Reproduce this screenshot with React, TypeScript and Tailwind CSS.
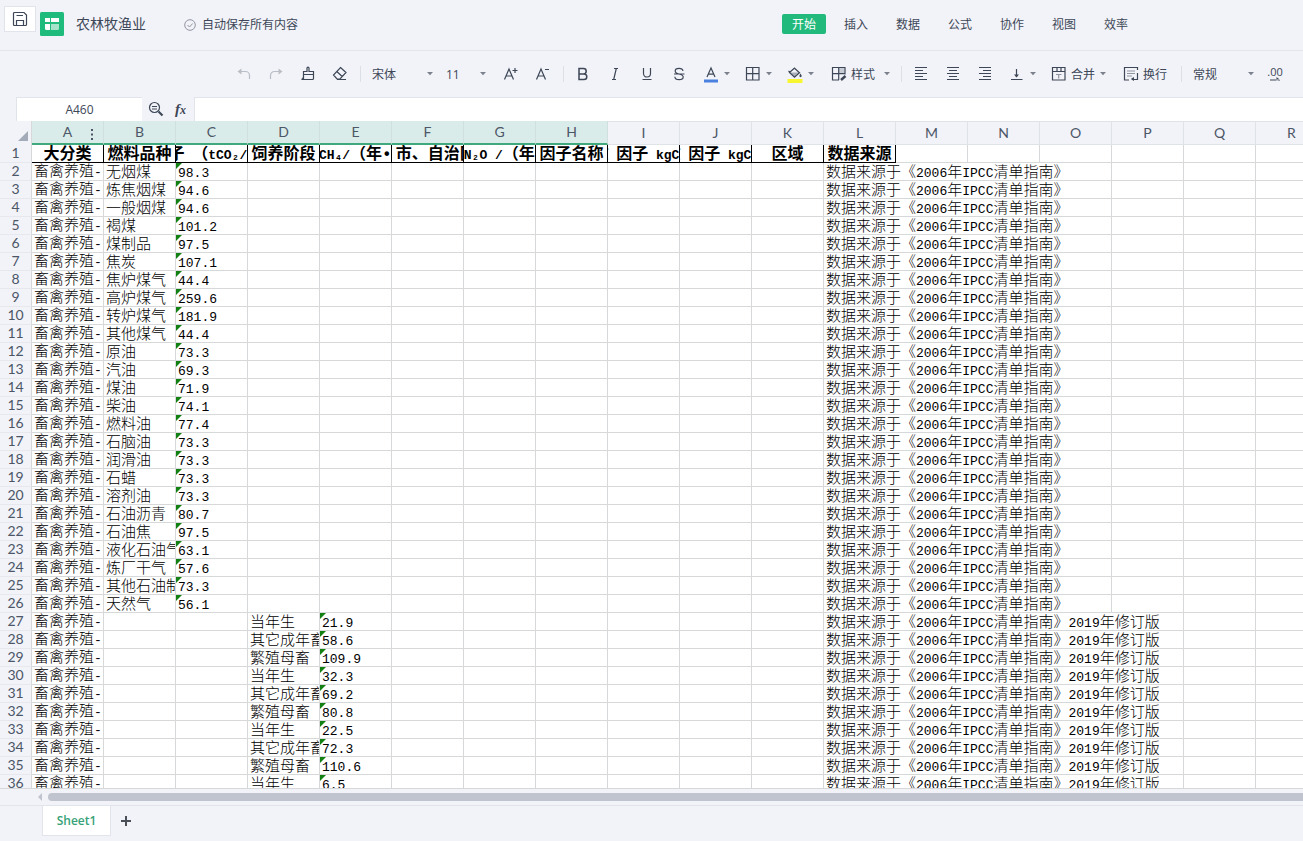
import React from "react";

const cols = "ABCDEFGHIJKLMNOPQR".split("");

const headers = [
  "大分类",
  "燃料品种",
  "因子 （tCO₂/TJ)",
  "饲养阶段",
  "kgCH₄/（年•头",
  "省、市、自治区  ",
  "kgN₂O /（年头",
  "因子名称",
  "排放 因子 kgCO₂/t",
  "排放 因子 kgCO₂/t",
  "区域",
  "数据来源",
];

const fuels = [
  ["无烟煤", "98.3"],
  ["炼焦烟煤", "94.6"],
  ["一般烟煤", "94.6"],
  ["褐煤", "101.2"],
  ["煤制品", "97.5"],
  ["焦炭", "107.1"],
  ["焦炉煤气", "44.4"],
  ["高炉煤气", "259.6"],
  ["转炉煤气", "181.9"],
  ["其他煤气", "44.4"],
  ["原油", "73.3"],
  ["汽油", "69.3"],
  ["煤油", "71.9"],
  ["柴油", "74.1"],
  ["燃料油", "77.4"],
  ["石脑油", "73.3"],
  ["润滑油", "73.3"],
  ["石蜡", "73.3"],
  ["溶剂油", "73.3"],
  ["石油沥青", "80.7"],
  ["石油焦", "97.5"],
  ["液化石油气", "63.1"],
  ["炼厂干气", "57.6"],
  ["其他石油制品", "73.3"],
  ["天然气", "56.1"],
];

const stages = [
  ["当年生", "21.9"],
  ["其它成年畜", "58.6"],
  ["繁殖母畜", "109.9"],
  ["当年生", "32.3"],
  ["其它成年畜", "69.2"],
  ["繁殖母畜", "80.8"],
  ["当年生", "22.5"],
  ["其它成年畜", "72.3"],
  ["繁殖母畜", "110.6"],
  ["当年生", "6.5"],
];

const source = "数据来源于《2006年IPCC清单指南》";

// latin runs are set smaller so that two of them fill one full-width character
const Mixed = ({ text }: { text: string }) => (
  <>
    {text.split(/([\x20-\x7e₀-₉]+)/).map((part, i) =>
      i % 2 ? (
        <span key={i} className="text-[13px]">{part}</span>
      ) : (
        part
      )
    )}
  </>
);

const Cell = ({ text = "", num, span }: { text?: string; num?: boolean; span?: number }) => (
  <td colSpan={span} className="relative border-r border-b border-[#d6d8da] p-0">
    {num && (
      <span className="absolute top-0 left-0 border-t-[6px] border-r-[6px] border-t-[#128012] border-r-transparent"></span>
    )}
    <div className="h-[17px] overflow-x-clip pl-0.5 leading-[22px] whitespace-pre">
      <Mixed text={text} />
    </div>
  </td>
);

const Blank = ({ n }: { n: number }) => (
  <>
    {Array.from({ length: n }, (_, i) => (
      <Cell key={i} />
    ))}
  </>
);

const RowNo = ({ n }: { n: number }) => (
  <th className="border-r border-b border-r-[#d6d8da] border-b-[#e6e8ed] bg-[#f2f3f8] p-0 align-top font-[Lato,sans-serif] text-sm leading-[15px] font-normal text-[#4c5667]">{n}</th>
);

const Category = () => (
  <td className="border-r border-b border-[#d6d8da] p-0">
    <div className="h-[17px] overflow-x-clip pl-0.5 leading-[19px] whitespace-pre">
      <Mixed text="畜禽养殖-" />
    </div>
  </td>
);

const Icon = ({ children, className = "" }: { children: React.ReactNode; className?: string }) => (
  <svg viewBox="0 0 16 16" className={`size-4 shrink-0 ${className}`} fill="none" stroke="currentColor" strokeWidth="1.2">
    {children}
  </svg>
);

const Caret = ({ className = "" }: { className?: string }) => (
  <svg viewBox="0 0 8 4" className={`h-1 w-2 shrink-0 ${className}`} fill="#7b818c">
    <path d="M1 0h6L4 3.2z" />
  </svg>
);

const Tool = ({ label, children }: { label: string; children: React.ReactNode }) => (
  <button aria-label={label} className="flex h-8 w-8 shrink-0 items-center justify-center">
    {children}
  </button>
);

const MenuTool = ({ label, children }: { label: string; children: React.ReactNode }) => (
  <button aria-label={label} className="flex h-8 shrink-0 items-center gap-1 pr-1.5 pl-2">
    {children}
    <Caret />
  </button>
);

const Picker = ({ label, value, width }: { label: string; value: string; width: string }) => (
  <label className={`relative flex h-8 shrink-0 items-center ${width}`}>
    <select aria-label={label} className="w-full appearance-none bg-transparent pt-0.5 pl-2 outline-none">
      <option>{value}</option>
    </select>
    <Caret className="absolute right-1" />
  </label>
);

const Sep = () => <span className="mr-[3px] ml-1 h-4 w-px shrink-0 bg-[#dcdfe5]"></span>;

const App = () => {
  return (
    <div className="flex h-screen flex-col overflow-hidden bg-[#f2f3f8] font-['Open_Sans','Noto_Sans_CJK_SC',sans-serif] text-xs text-[#3d4757]">
      {/* Title bar */}
      <header className="flex h-[51px] shrink-0 items-start border-b border-[#e1e4ea] pl-1">
        <button aria-label="保存" className="mt-1.5 flex h-[26px] w-8 items-center justify-center border border-[#e1e4ea] bg-white">
          <Icon>
            <path d="M1.500 2.500a1 1 0 0 1 1-1h9.500l2.500 2.500V13.500a1 1 0 0 1-1 1h-11a1 1 0 0 1-1-1zM4.500 14.500V9.500h7v5M4.500 4.500h6.500" />
          </Icon>
        </button>
        <svg viewBox="0 0 24 24" className="mt-3 ml-1 size-6">
          <rect width="24" height="24" rx="1.500" fill="#1fbb7d" />
          <path d="M5 6h5v4H5zM11 6h8v4h-8zM5 12h5v6H6.500A1.500 1.500 0 0 1 5 16.500z" fill="#fff" />
          <path d="M11 12h8v4.500a1.500 1.500 0 0 1-1.500 1.500H11z" fill="#a5e4cb" />
        </svg>
        <h1 className="mt-3 ml-3 text-sm leading-6">农林牧渔业</h1>
        <p className="mt-3 ml-[38px] flex items-center gap-1.5 leading-[26px]">
          <svg viewBox="0 0 12 12" className="size-3" fill="none" stroke="#8f959f">
            <circle cx="6" cy="6" r="5.300" />
            <path d="M3.500 6l2 2 3.200-3.500" />
          </svg>
          自动保存所有内容
        </p>
        <nav className="mt-3.5 mr-[165px] ml-auto flex gap-2">
          {["开始", "插入", "数据", "公式", "协作", "视图", "效率"].map((t, i) => (
            <button key={t} className={i === 0 ? "h-5 w-11 rounded-xs bg-[#22b97c] pt-0.5 leading-[18px] text-white" : "h-5 w-11 pt-0.5 leading-[18px]"}>
              {t}
            </button>
          ))}
        </nav>
      </header>

      {/* Toolbar */}
      <div className="flex h-[46px] shrink-0 items-center overflow-hidden pl-[228px]">
        <Tool label="撤销">
          <Icon className="text-[#b9bdc5]">
            <path d="M4 5.500h5.500a4 4 0 0 1 4 4V13" />
            <path d="M5.500 2.500v6l-4-3z" fill="currentColor" stroke="none" />
          </Icon>
        </Tool>
        <Tool label="恢复">
          <Icon className="text-[#b9bdc5]">
            <path d="M12 5.500H6.500a4 4 0 0 0-4 4V13" />
            <path d="M10.500 2.500v6l4-3z" fill="currentColor" stroke="none" />
          </Icon>
        </Tool>
        <Tool label="格式刷">
          <Icon>
            <path d="M3.500 13.500V5.500H7V2.200a1 1 0 0 1 2 0V5.500h4.500v7a1 1 0 0 1-1 1H1.500c1.500-.5 2-1.500 2-3M3.500 8.500h10" />
          </Icon>
        </Tool>
        <Tool label="清除">
          <Icon>
            <path d="M8.500 1.500L14 6.500l-6 6.500H5L1.500 9zM4.800 5.500l5.400 5M5 13.500h9" />
          </Icon>
        </Tool>
        <Sep />
        <Picker label="字体" value="宋体" width="w-[74px]" />
        <Picker label="字号" value="11" width="w-[53px]" />
        <span className="w-1 shrink-0"></span>
        <Tool label="增大字号">
          <Icon>
            <path d="M1.500 13.500L6 3l4.500 10.500M3 10h6M9.500 4.500h5M12 2v5" />
          </Icon>
        </Tool>
        <Tool label="减小字号">
          <Icon>
            <path d="M1.500 13.500L6 3l4.500 10.500M3 10h6M10 3.500h4" />
          </Icon>
        </Tool>
        <Sep />
        <Tool label="加粗">
          <Icon className="[stroke-width:1.5]">
            <path d="M4 2.500h4.500a2.700 2.700 0 0 1 0 5.400H4zM4 7.900h5a2.800 2.800 0 0 1 0 5.600H4z" />
          </Icon>
        </Tool>
        <Tool label="斜体">
          <Icon>
            <path d="M7 2.500h4M5 13.500h4M9.300 2.500L6.700 13.500" />
          </Icon>
        </Tool>
        <Tool label="下划线">
          <Icon>
            <path d="M4.500 2v5.500a3.500 3.500 0 0 0 7 0V2M3.500 13.500h9" />
          </Icon>
        </Tool>
        <Tool label="删除线">
          <Icon>
            <path d="M12 5c-.3-1.800-1.800-2.700-4-2.700S4.200 3.300 4.200 5c0 1.600 1.300 2.400 3.800 3s4.200 1.400 4.200 3c0 1.700-1.700 2.700-4.200 2.700S4 12.500 3.800 10.700M3 8h10.500" />
          </Icon>
        </Tool>
        <MenuTool label="字体颜色">
          <Icon className="overflow-visible">
            <path d="M4 11L8 2l4 9M5.300 8.200h5.400" />
            <path d="M1 15h14" stroke="#4a80e0" strokeWidth="3" />
          </Icon>
        </MenuTool>
        <MenuTool label="边框">
          <Icon>
            <path d="M1.500 1.500h12.500v12.500H1.500zM7.700 1.500v12.500M1.500 7.700h12.500" />
          </Icon>
        </MenuTool>
        <MenuTool label="填充颜色">
          <Icon className="overflow-visible">
            <path d="M3 6.500h9L7.500 11z" fill="#a9aeb8" stroke="none" />
            <path d="M7 1.800l5.500 5-5 4.500L2.500 6.500 7 2.500M1.500 5l2 1.500" />
            <path d="M13.500 7.500c1 1.500 1.200 2 1.200 2.500a1.100 1.100 0 0 1-2.300 0c0-.5.3-1 1.100-2.500z" fill="currentColor" stroke="none" />
            <path d="M.5 15h15" stroke="#f8f630" strokeWidth="4" />
          </Icon>
        </MenuTool>
        <span className="w-0.5 shrink-0"></span>
        <MenuTool label="样式">
          <Icon>
            <path d="M8 1.500h5.500v6H8z" fill="#c8ccd4" stroke="none" />
            <path d="M14 8.500V1.500H1.500v12.500H8M1.500 7.700H14M7.700 1.500v12.500" />
            <path d="M14.500 10l-4.500 4" strokeWidth="2.500" />
          </Icon>
          <span className="mr-1 pt-0.5">样式</span>
        </MenuTool>
        <Sep />
        <Tool label="左对齐">
          <Icon>
            <path d="M2 1.500h12M2 4.500h8M2 7.500h12M2 10.500h8M2 13.500h12" />
          </Icon>
        </Tool>
        <Tool label="居中">
          <Icon>
            <path d="M2 1.500h12M4 4.500h8M2 7.500h12M4 10.500h8M2 13.500h12" />
          </Icon>
        </Tool>
        <Tool label="右对齐">
          <Icon>
            <path d="M2 1.500h12M6 4.500h8M2 7.500h12M6 10.500h8M2 13.500h12" />
          </Icon>
        </Tool>
        <MenuTool label="垂直对齐">
          <Icon>
            <path d="M7.500 3v8M2 13.500h11.500" />
            <path d="M5 8.500h5l-2.500 3z" fill="currentColor" stroke="none" />
          </Icon>
        </MenuTool>
        <MenuTool label="合并">
          <Icon>
            <path d="M1.500 1.500h12.500v12.500H1.500zM1.500 5.500h12.500M6 1.500v4M10 1.500v4" />
            <path d="M5 8.500h5.500M7.700 8.500v4" stroke="#8f959f" />
          </Icon>
          <span className="pt-0.5">合并</span>
        </MenuTool>
        <button className="flex h-8 shrink-0 items-center gap-1 px-2.5">
          <Icon>
            <path d="M6 14H1.500V1.500h13V4M14.500 7v6.500H9" />
            <path d="M4 5h8M4 7.500h8M4 10h5" stroke="#8f959f" />
            <path d="M11 11v4l-3.200-2z" fill="currentColor" stroke="none" />
          </Icon>
          <span className="pt-0.5">换行</span>
        </button>
        <Sep />
        <Picker label="数字格式" value="常规" width="w-[74px]" />
        <Tool label="增加小数位">
          <span className="flex h-4 flex-col items-center">
            <span className="text-[11px] leading-[11px]">.00</span>
            <svg viewBox="0 0 12 4" className="h-1 w-3" fill="currentColor">
              <path d="M1 2.500h10v1H1zM7.500 0v3.500l3.500-.8z" />
            </svg>
          </span>
        </Tool>
      </div>

      {/* Name box and formula bar */}
      <div className="flex h-6 shrink-0 items-stretch pl-4">
        <input aria-label="名称框" defaultValue="A460" className="w-[126px] border-t border-l border-[#e1e4ea] bg-white text-center outline-none" />
        <div className="flex w-[52px] items-center pl-1.5">
          <Icon>
            <circle cx="6.500" cy="6.500" r="5" />
            <path d="M4 5.500h5M4 8h5" />
            <path d="M10.500 10.500l4 4" strokeWidth="2.200" />
          </Icon>
          <span className="ml-[11px] font-['Liberation_Serif',serif] text-[15px] leading-6 font-bold italic">
            f<span className="text-xs">x</span>
          </span>
        </div>
        <input aria-label="编辑栏" className="min-w-0 flex-1 border-t border-l border-[#e1e4ea] bg-white px-2 outline-none" />
      </div>

      {/* Sheet */}
      <main className="min-h-0 flex-1 overflow-hidden border-b border-[#d6d8da] bg-white">
        <table className="w-[1328px] table-fixed border-separate border-spacing-0 font-['Liberation_Mono','Noto_Sans_CJK_SC',monospace] text-[15px] font-light text-black">
          <colgroup>
            <col className="w-8" />
            {cols.map((c) => (
              <col key={c} className="w-[72px]" />
            ))}
          </colgroup>
          <thead className="font-[Lato,sans-serif] text-sm text-[#4c5667]">
            <tr>
              <th className="relative h-6 border-r border-[#d6d8da] bg-[#f2f3f8] p-0">
                <svg viewBox="0 0 10 10" className="absolute right-[3px] bottom-1 size-2.5" fill="#a3abb8">
                  <path d="M10 0v10H0z" />
                </svg>
              </th>
              {cols.map((c, i) => (
                <th
                  key={c}
                  className={
                    i < 8
                      ? "relative h-6 border-r border-b-2 border-r-[#cfe0de] border-b-[#3fa97d] bg-[#daecea] p-0 font-normal"
                      : "relative h-6 border-t border-r border-b border-[#dfe2e7] bg-[#f2f3f8] p-0 font-normal"
                  }
                >
                  {c}
                  {i === 0 && (
                    <svg viewBox="0 0 2 12" className="absolute top-2 right-2.5 h-3 w-0.5" fill="#4c5667">
                      <path d="M0 0h2v2H0zM0 4.500h2v2H0zM0 9h2v2H0z" />
                    </svg>
                  )}
                </th>
              ))}
            </tr>
          </thead>
          <tbody>
            <tr>
              <RowNo n={1} />
              {headers.map((h, i) => (
                <td key={i} className="border-r border-b border-black p-0 font-bold">
                  <div className="flex h-[17px] justify-center overflow-x-clip text-base leading-5 whitespace-pre">
                    <span className="shrink-0">
                      <Mixed text={h} />
                    </span>
                  </div>
                </td>
              ))}
              <Blank n={6} />
            </tr>
            {fuels.map(([name, value], i) => (
              <tr key={i}>
                <RowNo n={i + 2} />
                <Category />
                <Cell text={name} />
                <Cell text={value} num />
                <Blank n={8} />
                <Cell text={source} span={4} />
                <Blank n={3} />
              </tr>
            ))}
            {stages.map(([name, value], i) => (
              <tr key={i}>
                <RowNo n={i + 27} />
                <Category />
                <Blank n={2} />
                <Cell text={name} />
                <Cell text={value} num />
                <Blank n={6} />
                <Cell text={source + "2019年修订版"} span={5} />
                <Blank n={2} />
              </tr>
            ))}
          </tbody>
        </table>
      </main>

      {/* Horizontal scroll bar */}
      <div className="flex h-4 shrink-0 items-center gap-1.5 pl-[38px]">
        <svg viewBox="0 0 4 8" className="h-2 w-1" fill="#bfc4ce">
          <path d="M4 0v8L0 4z" />
        </svg>
        <div className="h-2 flex-1 rounded-l-full bg-[#bfc4ce]"></div>
      </div>

      {/* Sheet tabs */}
      <footer className="flex h-9 shrink-0 items-start border-t border-[#e1e4ea] pl-[42px]">
        <button className="h-[30px] w-[69px] border-r border-b border-l border-[#e1e4ea] bg-white font-semibold text-[#36a277]">Sheet1</button>
        <button aria-label="新建工作表" className="flex h-[30px] w-[30px] items-center justify-center">
          <svg viewBox="0 0 10 10" className="size-2.5" stroke="#4a4f58" strokeWidth="2">
            <path d="M5 0v10M0 5h10" />
          </svg>
        </button>
      </footer>
    </div>
  );
};

export default App;
